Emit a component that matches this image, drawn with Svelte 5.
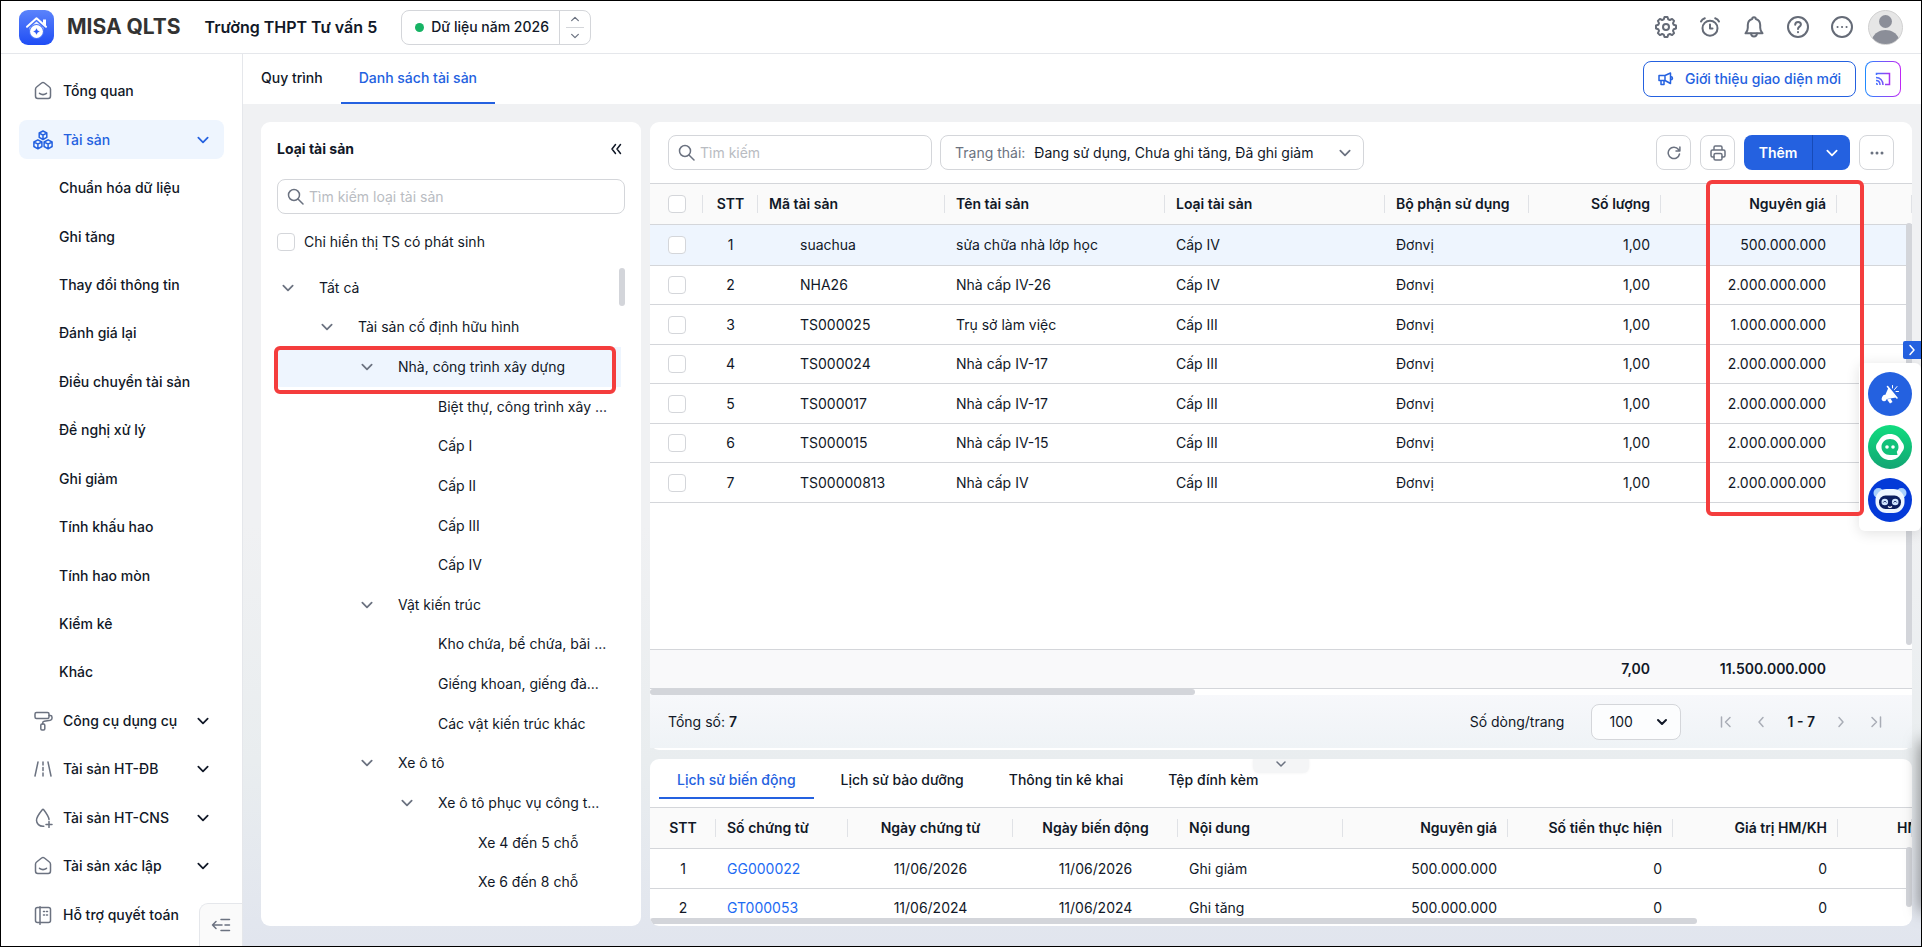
<script lang="ts">
  type Icon = 'home' | 'cubes' | 'roller' | 'road' | 'drop' | 'book';
  type MenuItem = { label: string; icon?: Icon; active?: boolean; expandable?: boolean };
  type TreeNode = { label: string; level: number; open?: boolean; selected?: boolean };

  const menu: MenuItem[] = [
    { label: 'Tổng quan', icon: 'home' },
    { label: 'Tài sản', icon: 'cubes', active: true, expandable: true },
    { label: 'Chuẩn hóa dữ liệu' },
    { label: 'Ghi tăng' },
    { label: 'Thay đổi thông tin' },
    { label: 'Đánh giá lại' },
    { label: 'Điều chuyển tài sản' },
    { label: 'Đề nghị xử lý' },
    { label: 'Ghi giảm' },
    { label: 'Tính khấu hao' },
    { label: 'Tính hao mòn' },
    { label: 'Kiểm kê' },
    { label: 'Khác' },
    { label: 'Công cụ dụng cụ', icon: 'roller', expandable: true },
    { label: 'Tài sản HT-ĐB', icon: 'road', expandable: true },
    { label: 'Tài sản HT-CNS', icon: 'drop', expandable: true },
    { label: 'Tài sản xác lập', icon: 'home', expandable: true },
    { label: 'Hỗ trợ quyết toán', icon: 'book' }
  ];

  const tree: TreeNode[] = [
    { label: 'Tất cả', level: 0, open: true },
    { label: 'Tài sản cố định hữu hình', level: 1, open: true },
    { label: 'Nhà, công trình xây dựng', level: 2, open: true, selected: true },
    { label: 'Biệt thự, công trình xây ...', level: 3 },
    { label: 'Cấp I', level: 3 },
    { label: 'Cấp II', level: 3 },
    { label: 'Cấp III', level: 3 },
    { label: 'Cấp IV', level: 3 },
    { label: 'Vật kiến trúc', level: 2, open: true },
    { label: 'Kho chứa, bể chứa, bãi ...', level: 3 },
    { label: 'Giếng khoan, giếng đà...', level: 3 },
    { label: 'Các vật kiến trúc khác', level: 3 },
    { label: 'Xe ô tô', level: 2, open: true },
    { label: 'Xe ô tô phục vụ công t...', level: 3, open: true },
    { label: 'Xe 4 đến 5 chỗ', level: 4 },
    { label: 'Xe 6 đến 8 chỗ', level: 4 }
  ];

  const assets = [
    { code: 'suachua', name: 'sửa chữa nhà lớp học', type: 'Cấp IV', price: '500.000.000' },
    { code: 'NHA26', name: 'Nhà cấp IV-26', type: 'Cấp IV', price: '2.000.000.000' },
    { code: 'TS000025', name: 'Trụ sở làm việc', type: 'Cấp III', price: '1.000.000.000' },
    { code: 'TS000024', name: 'Nhà cấp IV-17', type: 'Cấp III', price: '2.000.000.000' },
    { code: 'TS000017', name: 'Nhà cấp IV-17', type: 'Cấp III', price: '2.000.000.000' },
    { code: 'TS000015', name: 'Nhà cấp IV-15', type: 'Cấp III', price: '2.000.000.000' },
    { code: 'TS00000813', name: 'Nhà cấp IV', type: 'Cấp III', price: '2.000.000.000' }
  ];

  const historyTabs = ['Lịch sử biến động', 'Lịch sử bảo dưỡng', 'Thông tin kê khai', 'Tệp đính kèm'];

  const history = [
    { code: 'GG000022', date: '11/06/2026', content: 'Ghi giảm' },
    { code: 'GT000053', date: '11/06/2024', content: 'Ghi tăng' }
  ];
</script>

{#snippet chevron(dir: 'up' | 'down' | 'left' | 'right', size: number)}
  <svg class="icon" width={size} height={size} viewBox="0 0 12 12" aria-hidden="true">
    {#if dir === 'up'}
      <path d="M2 8l4-4 4 4" />
    {:else if dir === 'down'}
      <path d="M2 4l4 4 4-4" />
    {:else if dir === 'left'}
      <path d="M8 1.500L4 6l4 4.500" />
    {:else}
      <path d="M4 1.500L8 6l-4 4.500" />
    {/if}
  </svg>
{/snippet}

{#snippet search()}
  <svg class="icon search-icon" width="17" height="17" viewBox="0 0 17 17" aria-hidden="true">
    <circle cx="7" cy="7" r="5.500" />
    <path d="M11 11l5 5" />
  </svg>
{/snippet}

{#snippet menuIcon(name: Icon)}
  <svg class="icon menu-icon" width="20" height="20" viewBox="0 0 20 20" aria-hidden="true">
    {#if name === 'home'}
      <path d="M2.500 8.200c0-.9.400-1.700 1.100-2.200l5-4c.8-.6 2-.6 2.800 0l5 4c.7.500 1.100 1.300 1.100 2.200V15c0 1.400-.9 2.500-2.300 2.500H4.800c-1.400 0-2.300-1.100-2.300-2.500z" />
      <path d="M6.500 12.300c2 1.500 5 1.500 7 0" />
    {:else if name === 'cubes'}
      <path d="M10 1l3.800 2v4.300L10 9.500 6.200 7.300V3zM6.200 3L10 5.200 13.800 3M10 5.200v4.300" />
      <path d="M4.900 9.800l4 2.200v4.500l-4 2.300-4-2.300V12zM.9 12l4 2.200 4-2.200M4.900 14.200v4.600" />
      <path d="M15.100 9.800l4 2.200v4.500l-4 2.300-4-2.300V12zM11.100 12l4 2.200 4-2.200M15.100 14.200v4.600" />
    {:else if name === 'roller'}
      <rect x="2" y="1.500" width="14" height="6" rx="1.500" />
      <path d="M16 4.500h1.300c.9 0 1.700.7 1.700 1.700v1c0 1-.7 1.800-1.700 2l-6 1c-1 .2-1.600.8-1.600 1.800v1" />
      <rect x="7.800" y="13" width="4" height="6" rx="1.200" />
    {:else if name === 'road'}
      <path d="M5 3L2 17M15 3l3 14M10 3v3M10 8.500v3M10 14v3" />
    {:else if name === 'drop'}
      <path d="M16 11.500c-.2-3-3.300-7.200-5.300-9.800-.4-.5-1-.5-1.400 0C6.900 4.600 3.500 9 3.500 12.300c0 3.500 2.900 6 6.500 6h.8" />
      <path d="M16 13.500v6M13 16.500h6" />
    {:else}
      <path d="M7 1.800v17.500" />
      <rect x="2.500" y="2.500" width="15" height="15" rx="2" />
      <path d="M10.500 6.500h1M13.500 6.500h1M10.500 10h1M13.500 10h1" />
    {/if}
  </svg>
{/snippet}

<div class="page">
  <header class="topbar">
    <svg class="logo" width="35" height="35" viewBox="0 0 35 35" aria-hidden="true">
      <defs>
        <linearGradient id="logo-bg" x1="0" y1="0" x2="0" y2="1">
          <stop offset="0" stop-color="#5b83fb" />
          <stop offset="1" stop-color="#1f4df5" />
        </linearGradient>
      </defs>
      <rect width="35" height="35" rx="9" fill="url(#logo-bg)" />
      <path d="M24 9.500h3v6.500l-3-2.700z" fill="#fff" />
      <path d="M8 16.800l9.500-8.600 9.500 8.600" fill="none" stroke="#fff" stroke-width="2" stroke-linecap="round" stroke-linejoin="round" />
      <path d="M17.500 11.500l7 6.300V20h-14v-2.200z" fill="#e9efff" />
      <circle cx="17.500" cy="21.500" r="7.500" fill="#4a74fa" />
      <circle cx="17.500" cy="21.500" r="6.400" fill="#fff" />
      <path d="M17.500 18.800c.4 1.800 1 2.400 2.700 2.700-1.700.3-2.300.9-2.700 2.700-.4-1.800-1-2.400-2.700-2.700 1.700-.3 2.300-.9 2.700-2.700z" fill="#2a57f6" stroke="#2a57f6" stroke-width=".8" />
    </svg>
    <span class="brand">MISA QLTS</span>
    <strong class="org">Trường THPT Tư vấn 5</strong>
    <div class="year">
      <span class="year-label"><i class="dot"></i>Dữ liệu năm 2026</span>
      <span class="year-steps">
        <button aria-label="Năm sau">{@render chevron('up', 10)}</button>
        <button aria-label="Năm trước">{@render chevron('down', 10)}</button>
      </span>
    </div>
    <div class="top-actions">
      <button aria-label="Thiết lập">
        <svg class="icon" width="22" height="22" viewBox="0 0 22 22">
          <path d="M9.500 1h3l.7 2.300 1.700.7 2.200-1.100 2 2L18 7.100l.7 1.700 2.300.7v3l-2.300.7-.7 1.700 1.100 2.200-2 2-2.200-1.100-1.700.7-.7 2.300h-3l-.7-2.300-1.700-.7-2.200 1.100-2-2L4 14.900l-.7-1.700L1 12.500v-3l2.300-.7L4 7.100 2.900 4.900l2-2L7.100 4l1.700-.7z" />
          <circle cx="11" cy="11" r="3" />
        </svg>
      </button>
      <button aria-label="Nhắc việc">
        <svg class="icon" width="22" height="22" viewBox="0 0 22 22">
          <circle cx="11" cy="12.200" r="7.500" />
          <path d="M11 8.500v4h2.500M2 5.500c.7-1.500 2-2.700 3.800-3.300M20 5.500c-.7-1.500-2-2.700-3.800-3.300" />
        </svg>
      </button>
      <button aria-label="Thông báo">
        <svg class="icon" width="22" height="22" viewBox="0 0 22 22">
          <path d="M2.500 17.300h17c-1.800-1.500-2.300-3-2.300-5.500V9c0-3-1.800-5.300-4.400-6 0-1-.7-1.800-1.800-1.800S9.200 2 9.200 3C6.600 3.700 4.800 6 4.800 9v2.800c0 2.500-.5 4-2.300 5.500z" />
          <path d="M8 17.500c.2 1.800 1.400 3 3 3s2.800-1.200 3-3" />
        </svg>
      </button>
      <button aria-label="Trợ giúp">
        <svg class="icon" width="22" height="22" viewBox="0 0 22 22">
          <circle cx="11" cy="11" r="10" />
          <path d="M8.200 8.800c0-1.800 1.200-2.900 2.900-2.900 1.600 0 2.800 1 2.800 2.500 0 2.200-2.900 2.300-2.900 4.600M11 16v.3" />
        </svg>
      </button>
      <button aria-label="Khác">
        <svg class="icon" width="22" height="22" viewBox="0 0 22 22">
          <circle cx="11" cy="11" r="10" />
          <path d="M6.500 11h.1M11 11h.1M15.500 11h.1" />
        </svg>
      </button>
      <button class="avatar" aria-label="Tài khoản">
        <svg width="35" height="35" viewBox="0 0 35 35">
          <circle cx="17.500" cy="17.500" r="17" fill="#e6e6e6" stroke="#d0d0d0" />
          <circle cx="17.500" cy="11.500" r="6.500" fill="#8b8e98" />
          <path d="M4.500 28c2-5 7-8 13-8s11 3 13 8a17 17 0 0 1-26 0z" fill="#8b8e98" />
        </svg>
      </button>
    </div>
  </header>

  <div class="body">
    <aside class="sidebar">
      <nav>
        {#each menu as item}
          <div class="menu-cell">
            <a href="#menu" class="menu-item" class:active={item.active} class:child={!item.icon}>
              {#if item.icon}{@render menuIcon(item.icon)}{/if}
              <span>{item.label}</span>
              {#if item.expandable}{@render chevron('down', 14)}{/if}
            </a>
          </div>
        {/each}
      </nav>
      <button class="collapse" aria-label="Thu gọn menu">
        <svg class="icon" width="20" height="14" viewBox="0 0 20 14">
          <path d="M1.500 7H11M5 3.500L1.500 7 5 10.500M10 1.500h8.500M14 7h4.500M10 12.500h8.500" />
        </svg>
      </button>
    </aside>

    <main>
      <div class="tabbar">
        <a href="#process" class="tab">Quy trình</a>
        <a href="#assets" class="tab current">Danh sách tài sản</a>
        <div class="tabbar-actions">
          <button class="intro">
            <svg class="icon" width="16" height="16" viewBox="0 0 16 16" aria-hidden="true">
              <path d="M1 4.500h6v5H1zM7 4.500l5.500-2.500v10.500L7 9.500M3 9.500v4h3v-4M12.500 5.500c1.300.2 2 .8 2 1.700s-.7 1.500-2 1.700" />
            </svg>
            Giới thiệu giao diện mới
          </button>
          <button class="cast" aria-label="Hướng dẫn">
            <svg width="16" height="14" viewBox="0 0 16 14" fill="none" stroke="url(#cast-line)" stroke-width="1.500">
              <defs>
                <linearGradient id="cast-line" gradientUnits="userSpaceOnUse" x1="0" y1="0" x2="16" y2="0">
                  <stop offset="0" stop-color="#3b7bff" />
                  <stop offset="1" stop-color="#b32df0" />
                </linearGradient>
              </defs>
              <path d="M1.500 3V1.500h13v11H10M1 5.500c4 0 7 3 7 7.500M1 8.500c2.500 0 4 1.700 4 4.500M1 11.500c1 0 1.300.5 1.300 1.500" />
            </svg>
          </button>
        </div>
      </div>

      <div class="content">
        <section class="panel types">
          <div class="types-head">
            <h2>Loại tài sản</h2>
            <button aria-label="Thu gọn">
              <svg class="icon" width="12" height="12" viewBox="0 0 12 12"><path d="M5.500 1.500L2 6l3.500 4.500M10.500 1.500L7 6l3.500 4.500" /></svg>
            </button>
          </div>
          <label class="field">
            {@render search()}
            <input type="text" placeholder="Tìm kiếm loại tài sản" aria-label="Tìm kiếm loại tài sản" />
          </label>
          <label class="only">
            <input type="checkbox" />
            Chỉ hiển thị TS có phát sinh
          </label>
          <div class="tree-wrap">
            <ul class="tree">
              {#each tree as node}
                <li class="level-{node.level}" class:selected={node.selected}>
                  <span class="toggle">{#if node.open}{@render chevron('down', 14)}{/if}</span>
                  <span class="node-label">{node.label}</span>
                  {#if node.selected}<i class="mark mark-node"></i>{/if}
                </li>
              {/each}
            </ul>
            <i class="bar tree-bar"></i>
          </div>
        </section>

        <div class="right">
          <section class="panel list">
            <div class="toolbar">
              <label class="field find">
                {@render search()}
                <input type="text" placeholder="Tìm kiếm" aria-label="Tìm kiếm" />
              </label>
              <label class="field status">
                <span>Trạng thái:</span>
                <select><option>Đang sử dụng, Chưa ghi tăng, Đã ghi giảm</option></select>
                {@render chevron('down', 14)}
              </label>
              <div class="tools">
                <button class="square" aria-label="Tải lại">
                  <svg class="icon" width="14" height="14" viewBox="0 0 14 14"><path d="M12.500 8A5.700 5.700 0 1 1 11.500 3.500L12.800 5M12.900 1v4H9" /></svg>
                </button>
                <button class="square" aria-label="In">
                  <svg class="icon" width="16" height="16" viewBox="0 0 16 16">
                    <path d="M4 5V2.500C4 1.700 4.500 1 5.300 1h5.400c.8 0 1.300.7 1.300 1.500V5M4 12H2.500C1.700 12 1 11.300 1 10.500v-4C1 5.700 1.700 5 2.500 5h11c.8 0 1.500.7 1.500 1.500v4c0 .8-.7 1.500-1.500 1.500H12" />
                    <rect x="4" y="8.500" width="8" height="6.500" rx="1.500" />
                  </svg>
                </button>
                <div class="add">
                  <button>Thêm</button>
                  <button aria-label="Thêm lựa chọn">{@render chevron('down', 14)}</button>
                </div>
                <button class="square" aria-label="Thao tác khác">
                  <svg width="14" height="4" viewBox="0 0 14 4" fill="#6b7280">
                    <circle cx="2" cy="2" r="1.500" /><circle cx="7" cy="2" r="1.500" /><circle cx="12" cy="2" r="1.500" />
                  </svg>
                </button>
              </div>
            </div>

            <div class="table-area">
              <table>
                <colgroup>
                  <col class="w53" /><col class="w55" /><col class="w187" /><col class="w220" /><col class="w220" />
                  <col class="w144" /><col class="w132" /><col class="w176" /><col />
                </colgroup>
                <thead>
                  <tr>
                    <th class="pick"><input type="checkbox" aria-label="Chọn tất cả" /></th>
                    <th class="mid">STT</th>
                    <th>Mã tài sản</th>
                    <th>Tên tài sản</th>
                    <th>Loại tài sản</th>
                    <th>Bộ phận sử dụng</th>
                    <th class="num">Số lượng</th>
                    <th class="num">Nguyên giá</th>
                    <th></th>
                  </tr>
                </thead>
                <tbody>
                  {#each assets as asset, i}
                    <tr class:chosen={i === 0}>
                      <td class="pick"><input type="checkbox" aria-label={`Chọn ${asset.code}`} /></td>
                      <td class="mid">{i + 1}</td>
                      <td class="code">{asset.code}</td>
                      <td>{asset.name}</td>
                      <td>{asset.type}</td>
                      <td>Đơnvị</td>
                      <td class="num">1,00</td>
                      <td class="num">{asset.price}</td>
                      <td></td>
                    </tr>
                  {/each}
                </tbody>
              </table>
              <i class="bar list-bar"></i>
            </div>
            <table class="summary">
              <colgroup>
                <col class="w879" /><col class="w132" /><col class="w176" /><col />
              </colgroup>
              <tbody>
                <tr>
                  <td></td>
                  <td class="num">7,00</td>
                  <td class="num">11.500.000.000</td>
                  <td></td>
                </tr>
              </tbody>
            </table>
            <div class="track"><i class="list-thumb"></i></div>

            <footer class="pager">
              <span class="total">Tổng số: <b>7</b></span>
              <label class="page-size">
                <span>Số dòng/trang</span>
                <span class="size-box">
                  <select><option>100</option></select>
                  {@render chevron('down', 12)}
                </span>
              </label>
              <div class="pages">
                <button aria-label="Trang đầu">
                  <svg class="icon" width="12" height="12" viewBox="0 0 12 12"><path d="M1.500 1v10M10 1.500L5.500 6l4.500 4.500" /></svg>
                </button>
                <button aria-label="Trang trước">{@render chevron('left', 12)}</button>
                <b>1 - 7</b>
                <button aria-label="Trang sau">{@render chevron('right', 12)}</button>
                <button aria-label="Trang cuối">
                  <svg class="icon" width="12" height="12" viewBox="0 0 12 12"><path d="M10.500 1v10M2 1.500L6.500 6 2 10.500" /></svg>
                </button>
              </div>
            </footer>
            <i class="mark mark-price"></i>
          </section>

          <section class="panel history">
            <button class="handle" aria-label="Thu gọn chi tiết">{@render chevron('down', 12)}</button>
            <div class="history-tabs">
              {#each historyTabs as tab, i}
                <button class:current={i === 0}>{tab}</button>
              {/each}
            </div>
            <div class="history-area">
              <table>
                <colgroup>
                  <col class="w66" /><col class="w132" /><col class="w165" /><col class="w165" /><col class="w165" />
                  <col class="w165" /><col class="w165" /><col class="w165" /><col />
                </colgroup>
                <thead>
                  <tr>
                    <th class="mid">STT</th>
                    <th>Số chứng từ</th>
                    <th class="mid">Ngày chứng từ</th>
                    <th class="mid">Ngày biến động</th>
                    <th>Nội dung</th>
                    <th class="num">Nguyên giá</th>
                    <th class="num">Số tiền thực hiện</th>
                    <th class="num">Giá trị HM/KH</th>
                    <th class="cut">HM</th>
                  </tr>
                </thead>
                <tbody>
                  {#each history as row, i}
                    <tr>
                      <td class="mid">{i + 1}</td>
                      <td><a href="#voucher">{row.code}</a></td>
                      <td class="mid">{row.date}</td>
                      <td class="mid">{row.date}</td>
                      <td>{row.content}</td>
                      <td class="num">500.000.000</td>
                      <td class="num">0</td>
                      <td class="num">0</td>
                      <td></td>
                    </tr>
                  {/each}
                </tbody>
              </table>
              <i class="bar history-bar"></i>
              <i class="history-thumb"></i>
            </div>
          </section>
        </div>
      </div>
    </main>
  </div>

  <div class="dock">
    <button class="dock-toggle" aria-label="Ẩn tiện ích">{@render chevron('right', 12)}</button>
    <div class="dock-items">
      <button aria-label="Tin tức">
        <svg width="44" height="44" viewBox="0 0 44 44">
          <circle cx="22" cy="22" r="22" fill="#2461e0" />
          <path d="M20.500 15.500l7.500 10-9 1.500-2-3.500z" fill="#fff" />
          <path d="M19.500 14.500l9.500 11.500" stroke="#fff" stroke-width="1.600" stroke-linecap="round" />
          <ellipse cx="16.500" cy="26" rx="2.600" ry="3.300" transform="rotate(25 16.500 26)" fill="#fff" />
          <path d="M19 27.500l3.500-1 2 3.500-2.500 1.500z" fill="#fff" />
          <path d="M24.500 16v-2.500M26.500 17.500l2.500-3M28 19.500h2.500" stroke="#fff" stroke-linecap="round" />
        </svg>
      </button>
      <button aria-label="Trò chuyện">
        <svg width="44" height="44" viewBox="0 0 44 44">
          <defs>
            <linearGradient id="chat-bg" x1="0" y1="0" x2="0" y2="1">
              <stop offset="0" stop-color="#11dc7f" />
              <stop offset="1" stop-color="#12a573" />
            </linearGradient>
          </defs>
          <circle cx="22" cy="22" r="22" fill="url(#chat-bg)" />
          <path d="M22 9c5 0 9 2.500 11.300 7 1 1.500 2.700 3 2.700 6s-1.700 4.500-2.700 6C31 32.500 27 35 22 35s-9-2.500-11.300-7C9.700 26.500 8 25 8 22s1.700-4.500 2.700-6C13 11.500 17 9 22 9z" fill="#fff" />
          <path d="M22 14c4.800 0 8.500 3.500 8.500 8 0 2-.7 3.500-1.700 4.800l.7 3.200H22c-4.800 0-8.500-3.500-8.500-8s3.700-8 8.500-8z" fill="#12c17a" />
          <circle cx="19" cy="22" r="1.800" fill="#fff" />
          <circle cx="25" cy="22" r="1.800" fill="#fff" />
        </svg>
      </button>
      <button aria-label="Trợ lý AI">
        <svg width="44" height="44" viewBox="0 0 44 44">
          <circle cx="22" cy="22" r="22" fill="#043ad8" />
          <circle cx="10.500" cy="15" r="5" fill="#a9d0fb" />
          <circle cx="33.500" cy="15" r="5" fill="#a9d0fb" />
          <rect x="7.500" y="11" width="29" height="24" rx="11" fill="#eef6ff" />
          <rect x="11" y="17.500" width="22" height="13.500" rx="6.500" fill="#0b1d5e" />
          <circle cx="16.800" cy="24" r="3.300" fill="#cfe4ff" />
          <circle cx="27.200" cy="24" r="3.300" fill="#cfe4ff" />
          <path d="M15.300 24.500l1.500-1.500 1.500 1.500M25.700 24.500l1.500-1.500 1.500 1.500" fill="none" stroke="#0b1d5e" />
          <path d="M20 28.500c1.200 1 2.800 1 4 0" fill="none" stroke="#fff" stroke-width="1.200" />
        </svg>
      </button>
    </div>
  </div>
  <i class="edge-shade"></i>
</div>

<style>
  :global(body) {
    margin: 0;
  }

  .page {
    --ink: #111827;
    --muted: #6b7280;
    --line: #d4d6da;
    --soft: #e5e7eb;
    --blue: #2461e0;
    --pale: #eef5fe;
    --thumb: #d3d5da;
    position: relative;
    display: flex;
    flex-direction: column;
    box-sizing: border-box;
    height: 100vh;
    overflow: hidden;
    border: 1px solid #000;
    color: var(--ink);
    background: #fff;
    font-family: Inter, 'Liberation Sans', sans-serif;
    font-size: 14px;
    line-height: 20px;
  }

  button,
  input,
  select {
    margin: 0;
    padding: 0;
    border: 0;
    color: inherit;
    background: none;
    font: inherit;
  }

  button {
    display: flex;
    align-items: center;
    justify-content: center;
    cursor: pointer;
  }

  select {
    appearance: none;
  }

  a {
    color: inherit;
    text-decoration: none;
  }

  svg {
    display: block;
    flex: none;
  }

  .icon {
    fill: none;
    stroke: currentColor;
    stroke-width: 1.500;
    stroke-linecap: round;
    stroke-linejoin: round;
  }

  input[type='checkbox'] {
    appearance: none;
    display: block;
    flex: none;
    box-sizing: border-box;
    width: 18px;
    height: 18px;
    border: 1px solid var(--line);
    border-radius: 4px;
    background: #fff;
  }

  /* top bar */
  .topbar {
    display: flex;
    flex: none;
    align-items: center;
    box-sizing: border-box;
    height: 53px;
    padding: 0 18px;
    border-bottom: 1px solid var(--soft);
  }

  .brand {
    margin-left: 13px;
    color: #333;
    font-size: 21px;
    font-weight: 700;
    white-space: nowrap;
  }

  .org {
    margin-left: 24px;
    font-size: 16px;
    font-weight: 600;
    white-space: nowrap;
  }

  .year {
    display: flex;
    box-sizing: border-box;
    height: 35px;
    margin-left: 24px;
    border: 1px solid var(--line);
    border-radius: 8px;
    font-weight: 500;
    white-space: nowrap;
  }

  .year-label {
    display: flex;
    align-items: center;
    gap: 7px;
    padding: 0 10px 0 13px;
  }

  .dot {
    width: 9px;
    height: 9px;
    border-radius: 50%;
    background: #16b364;
  }

  .year-steps {
    display: flex;
    flex-direction: column;
    padding: 0 6px;
    border-left: 1px solid var(--line);
    color: var(--muted);
  }

  .year-steps button {
    flex: 1;
    width: 18px;
  }

  .year-steps button + button {
    border-top: 1px solid var(--line);
  }

  .top-actions {
    display: flex;
    align-items: center;
    gap: 22px;
    margin-left: auto;
    color: #656b77;
  }

  .top-actions .icon {
    stroke-width: 2;
  }

  .avatar {
    margin-left: -7px;
  }

  /* sidebar */
  .body {
    display: flex;
    flex: 1;
    min-height: 0;
  }

  .sidebar {
    position: relative;
    display: flex;
    flex: none;
    box-sizing: border-box;
    width: 242px;
    border-right: 1px solid var(--soft);
  }

  nav {
    display: flex;
    flex: 1;
    flex-direction: column;
    padding: 13px 18px 7px;
  }

  .menu-cell {
    display: flex;
    flex: 1;
    align-items: center;
  }

  .menu-item {
    display: flex;
    flex: 1;
    align-items: center;
    gap: 10px;
    height: 39px;
    padding: 0 14px;
    border-radius: 8px;
    font-weight: 500;
    white-space: nowrap;
  }

  .menu-item span {
    flex: 1;
  }

  .menu-item.child {
    padding-left: 40px;
  }

  .menu-icon {
    color: var(--muted);
  }

  .menu-item.active,
  .menu-item.active .menu-icon {
    color: var(--blue);
  }

  .menu-item.active {
    background: var(--pale);
  }

  .collapse {
    position: absolute;
    right: 0;
    bottom: 0;
    width: 43px;
    height: 43px;
    border: 1px solid var(--soft);
    border-width: 1px 0 0 1px;
    border-radius: 9px 0 0;
    color: var(--muted);
    background: #fafafa;
  }

  /* tab bar */
  main {
    display: flex;
    flex: 1;
    flex-direction: column;
    min-width: 0;
  }

  .tabbar {
    display: flex;
    flex: none;
    height: 50px;
    padding-right: 20px;
    background: #fff;
  }

  .tab {
    box-sizing: border-box;
    padding: 14px 18px 0;
    border-bottom: 2px solid transparent;
    font-weight: 500;
  }

  .tab.current {
    border-color: var(--blue);
    color: var(--blue);
  }

  .tabbar-actions {
    display: flex;
    align-items: center;
    gap: 9px;
    margin-left: auto;
  }

  .intro {
    gap: 11px;
    height: 36px;
    padding: 0 14px;
    border: 1px solid var(--blue);
    border-radius: 8px;
    color: var(--blue);
    font-weight: 500;
  }

  .cast {
    width: 36px;
    height: 36px;
    border: 1px solid transparent;
    border-radius: 8px;
    background:
      linear-gradient(#fff, #fff) padding-box,
      linear-gradient(90deg, #1f8bff, #c026f5) border-box;
  }

  /* content */
  .content {
    display: flex;
    flex: 1;
    gap: 9px;
    min-height: 0;
    padding: 18px 9px 20px 18px;
    background: linear-gradient(#f0f1f3 50%, #e9edef 78%, #e1e5ee);
  }

  .panel {
    position: relative;
    border-radius: 9px;
    background: #fff;
  }

  .types {
    display: flex;
    flex: none;
    flex-direction: column;
    box-sizing: border-box;
    width: 380px;
    padding: 16px 16px 24px;
  }

  .types-head {
    display: flex;
    align-items: center;
    justify-content: space-between;
    height: 22px;
    padding-right: 3px;
  }

  h2 {
    margin: 0;
    font-size: 14px;
    font-weight: 700;
  }

  .field {
    display: flex;
    align-items: center;
    box-sizing: border-box;
    height: 35px;
    padding: 0 9px;
    border: 1px solid var(--line);
    border-radius: 8px;
    background: #fff;
  }

  .field input {
    flex: 1;
    min-width: 0;
    margin-left: 5px;
    outline: 0;
  }

  .field input::placeholder {
    color: #b9bcc2;
  }

  .search-icon {
    color: var(--muted);
  }

  .types .field {
    flex: none;
    margin-top: 19px;
  }

  .only {
    display: flex;
    align-items: center;
    gap: 9px;
    margin-top: 18px;
  }

  .tree-wrap {
    position: relative;
    display: flex;
    flex: 1;
    margin-top: 16px;
    padding-right: 4px;
  }

  .tree {
    display: flex;
    flex: 1;
    flex-direction: column;
    margin: 0;
    padding: 0;
    list-style: none;
  }

  .tree li {
    position: relative;
    display: flex;
    flex: 1;
    align-items: center;
    white-space: nowrap;
  }

  .tree li.selected {
    background: var(--pale);
  }

  .toggle {
    width: 38px;
    padding-left: 4px;
    color: var(--muted);
  }

  .level-1 .toggle {
    margin-left: 39px;
  }

  .level-2 .toggle {
    margin-left: 79px;
  }

  .level-3 .toggle {
    margin-left: 119px;
  }

  .level-4 .toggle {
    margin-left: 159px;
  }

  .bar {
    position: absolute;
    width: 6px;
    border-radius: 3px;
    background: var(--thumb);
  }

  .tree-bar {
    top: 0;
    right: 0;
    height: 38px;
  }

  .mark {
    position: absolute;
    z-index: 2;
    border: 4px solid #f43d3d;
    border-radius: 6px;
    pointer-events: none;
  }

  .mark-node {
    inset: -1px 5px -7px -3px;
  }

  .mark-price {
    top: 58px;
    right: 48px;
    width: 150px;
    height: 328px;
  }

  .right {
    display: flex;
    flex: 1;
    flex-direction: column;
    gap: 9px;
    min-width: 0;
  }

  .list {
    display: flex;
    flex: 1;
    flex-direction: column;
    min-height: 0;
    padding-bottom: 2px;
  }

  .toolbar {
    display: flex;
    flex: none;
    gap: 8px;
    padding: 13px 18px;
  }

  .find {
    width: 264px;
  }

  .status {
    width: 424px;
    padding: 0 11px 0 14px;
    color: var(--muted);
    white-space: nowrap;
  }

  .status select {
    flex: 1;
    min-width: 0;
    margin-left: 9px;
    color: var(--ink);
  }

  .tools {
    display: flex;
    gap: 9px;
    margin-left: auto;
  }

  .square {
    box-sizing: border-box;
    width: 35px;
    height: 35px;
    border: 1px solid var(--line);
    border-radius: 8px;
    color: var(--muted);
  }

  .add {
    display: flex;
    overflow: hidden;
    border-radius: 8px;
    color: #fff;
    background: var(--blue);
    font-weight: 600;
  }

  .add button {
    width: 68px;
  }

  .add button + button {
    width: 38px;
    border-left: 1px solid #174bb8;
  }

  /* tables */
  .table-area {
    position: relative;
    flex: 1;
    overflow: hidden;
  }

  table {
    width: 100%;
    border-collapse: separate;
    border-spacing: 0;
    table-layout: fixed;
  }

  .w53 { width: 53px; }
  .w55 { width: 55px; }
  .w66 { width: 66px; }
  .w132 { width: 132px; }
  .w144 { width: 144px; }
  .w165 { width: 165px; }
  .w176 { width: 176px; }
  .w187 { width: 187px; }
  .w220 { width: 220px; }
  .w879 { width: 879px; }

  th,
  td {
    box-sizing: border-box;
    height: 39px;
    padding: 0 11px;
    border-bottom: 1px solid var(--line);
    text-align: left;
    white-space: nowrap;
  }

  th {
    position: relative;
    height: 42px;
    border-top: 1px solid var(--line);
    background: #fafafa;
    font-weight: 600;
  }

  th::after {
    position: absolute;
    top: 11px;
    right: 0;
    width: 1px;
    height: 18px;
    background: #e0e2e6;
    content: '';
  }

  tbody tr:nth-child(odd) td {
    height: 40px;
  }

  tbody tr.chosen td {
    height: 41px;
    background: var(--pale);
  }

  .pick {
    padding: 0 0 0 18px;
  }

  .mid {
    text-align: center;
  }

  .num {
    text-align: right;
  }

  td.code {
    padding-left: 42px;
  }

  .list-bar {
    top: 40px;
    right: 0;
    bottom: 4px;
  }

  .summary {
    flex: none;
  }

  .summary td {
    border-top: 1px solid var(--line);
    background: #f9f9fa;
    font-weight: 600;
  }

  .track {
    flex: none;
    height: 6px;
  }

  .list-thumb {
    display: block;
    width: 545px;
    max-width: 60%;
    height: 6px;
    border-radius: 3px;
    background: var(--thumb);
  }

  .pager {
    display: flex;
    flex: none;
    align-items: center;
    height: 53px;
    padding: 0 27px 0 18px;
    background: linear-gradient(#f7f8fb, #eff3f6);
  }

  .pager b {
    font-weight: 600;
  }

  .page-size {
    display: flex;
    align-items: center;
    gap: 27px;
    margin-left: auto;
  }

  .size-box {
    display: flex;
    align-items: center;
    box-sizing: border-box;
    width: 90px;
    height: 36px;
    padding: 0 12px 0 17px;
    border: 1px solid var(--line);
    border-radius: 8px;
    background: #fcfdfe;
  }

  .size-box select {
    flex: 1;
  }

  .size-box .icon {
    stroke-width: 2;
  }

  .pages {
    display: flex;
    align-items: center;
    gap: 17px;
    margin-left: 36px;
  }

  .pages button {
    width: 18px;
    height: 18px;
    color: #a9adb6;
  }

  /* history */
  .history {
    flex: none;
    overflow: hidden;
  }

  .handle {
    position: absolute;
    top: -4px;
    left: 603px;
    width: 56px;
    height: 18px;
    border-radius: 6px;
    color: var(--muted);
    background: #f4f5f6;
    box-shadow: 0 0 3px rgba(0, 0, 0, 0.06);
  }

  .history-tabs {
    display: flex;
    gap: 9px;
    height: 40px;
    padding: 0 9px 8px;
  }

  .history-tabs button {
    padding: 4px 18px 0;
    border-bottom: 2px solid transparent;
    font-weight: 500;
    white-space: nowrap;
  }

  .history-tabs button.current {
    border-color: var(--blue);
    color: var(--blue);
  }

  .history-area {
    position: relative;
    height: 119px;
    overflow: hidden;
  }

  .history-area a {
    color: #1d6bf3;
  }

  th.cut {
    padding: 0 0 0 59px;
    overflow: hidden;
  }

  .history-bar {
    top: 40px;
    right: 0;
    height: 60px;
  }

  .history-thumb {
    position: absolute;
    bottom: 2px;
    left: 0;
    width: 83%;
    height: 6px;
    border-radius: 3px;
    background: var(--thumb);
  }

  /* floating helpers */
  .dock {
    position: absolute;
    top: 340px;
    right: 0;
    display: flex;
    flex-direction: column;
    align-items: flex-end;
    gap: 4px;
  }

  .dock-toggle {
    width: 18px;
    height: 18px;
    border-radius: 2px 0 0 2px;
    color: #fff;
    background: var(--blue);
  }

  .dock-items {
    display: flex;
    flex-direction: column;
    gap: 9px;
    padding: 9px;
    border-radius: 6px;
    background: #fff;
    box-shadow: 0 2px 14px rgba(0, 0, 0, 0.12);
  }

  .edge-shade {
    position: absolute;
    top: 740px;
    right: -10px;
    width: 10px;
    height: 170px;
    box-shadow: 0 0 16px rgba(0, 0, 0, 0.6);
  }
</style>
